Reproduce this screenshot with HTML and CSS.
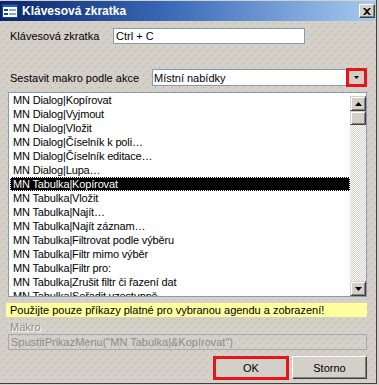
FILE: index.html
```html
<!DOCTYPE html>
<html lang="cs">

<head>
    <meta charset="UTF-8">
    <meta name="viewport" content="width=device-width, initial-scale=1.0">
    <title>Klávesová zkratka</title>
    <link rel="stylesheet" href="styles.css">
</head>

<body>
    <div class="window">
        <div class="titlebar">
            <svg class="app-icon" width="16" height="14" viewBox="0 0 16 14">
                <rect x="0.5" y="0.5" width="15" height="13" fill="#fff" stroke="#1d3f8f"/>
                <rect x="1" y="1" width="14" height="2" fill="#2c5bc4"/>
                <rect x="2" y="5" width="4" height="2" fill="#1d3f8f"/>
                <rect x="7" y="5" width="7" height="2" fill="#7ea6e0"/>
                <rect x="2" y="9" width="4" height="2" fill="#1d3f8f"/>
                <rect x="7" y="9" width="7" height="2" fill="#7ea6e0"/>
            </svg>
            <span class="title">Klávesová zkratka</span>
            <div class="close-btn">
                <svg width="8" height="7" viewBox="0 0 8 7">
                    <path d="M0 0 L2 0 L4 2 L6 0 L8 0 L5 3.5 L8 7 L6 7 L4 5 L2 7 L0 7 L3 3.5 Z" fill="#000"/>
                </svg>
            </div>
        </div>

        <div class="content">
            <div class="row row-key">
                <span class="lbl lbl-key">Klávesová zkratka</span>
                <div class="field field-key">Ctrl + C</div>
            </div>

            <div class="row row-build">
                <span class="lbl lbl-build">Sestavit makro podle akce</span>
                <div class="combo">
                    <span class="combo-text">Místní nabídky</span>
                    <span class="combo-btn">
                        <svg width="5" height="3" viewBox="0 0 5 3"><path d="M0 0 H5 L2.5 3 Z" fill="#000"/></svg>
                    </span>
                </div>
            </div>

            <div class="listbox">
                <div class="items">
                    <div class="item">MN Dialog|Kopírovat</div>
                    <div class="item">MN Dialog|Vyjmout</div>
                    <div class="item">MN Dialog|Vložit</div>
                    <div class="item">MN Dialog|Číselník k poli…</div>
                    <div class="item">MN Dialog|Číselník editace…</div>
                    <div class="item">MN Dialog|Lupa…</div>
                    <div class="item selected">MN Tabulka|Kopírovat</div>
                    <div class="item">MN Tabulka|Vložit</div>
                    <div class="item">MN Tabulka|Najít…</div>
                    <div class="item">MN Tabulka|Najít záznam…</div>
                    <div class="item">MN Tabulka|Filtrovat podle výběru</div>
                    <div class="item">MN Tabulka|Filtr mimo výběr</div>
                    <div class="item">MN Tabulka|Filtr pro:</div>
                    <div class="item">MN Tabulka|Zrušit filtr či řazení dat</div>
                    <div class="item">MN Tabulka|Seřadit vzestupně</div>
                </div>
                <div class="vscroll">
                    <div class="sb-btn">
                        <svg width="7" height="4" viewBox="0 0 7 4"><path d="M3.5 0 L7 4 H0 Z" fill="#000"/></svg>
                    </div>
                    <div class="sb-thumb"></div>
                    <div class="sb-track"></div>
                    <div class="sb-btn">
                        <svg width="7" height="4" viewBox="0 0 7 4"><path d="M0 0 H7 L3.5 4 Z" fill="#000"/></svg>
                    </div>
                </div>
            </div>

            <div class="hint">Použijte pouze příkazy platné pro vybranou agendu a zobrazení!</div>

            <div class="lbl-macro">Makro</div>
            <div class="macro">SpustitPrikazMenu("MN Tabulka|&amp;Kopírovat")</div>

            <div class="buttons">
                <button class="btn btn-ok">OK</button>
                <button class="btn btn-cancel">Storno</button>
            </div>
        </div>
    </div>
</body>

</html>
```

FILE: styles.css
```css
* {
    box-sizing: border-box;
}

html, body {
    margin: 0;
    padding: 0;
}

body {
    width: 379px;
    height: 385px;
    overflow: hidden;
    background-color: #d4d0c8;
    font-family: "Liberation Sans", Arial, sans-serif;
    font-size: 11px;
    color: #000;
}

.window {
    width: 377px;
    height: 384px;
    display: flex;
    flex-direction: column;
    border-right: 1px solid #404040;
    border-bottom: 1px solid #404040;
    padding-top: 1px;
    background-color: #d4d0c8;
}

/* title bar */
.titlebar {
    height: 20px;
    display: flex;
    align-items: center;
    padding: 0 1px 0 2px;
    background: linear-gradient(to right, #0a246a 0%, #3a6ab8 45%, #a6caf0 100%);
    color: #fff;
}

.app-icon {
    flex: none;
    margin-right: 4px;
}

.title {
    font-weight: bold;
    font-size: 12px;
    flex: 1;
}

.close-btn {
    width: 16px;
    height: 14px;
    display: flex;
    align-items: center;
    justify-content: center;
    background-color: #d4d0c8;
    border: 1px solid;
    border-color: #fff #404040 #404040 #fff;
    box-shadow: inset -1px -1px #808080;
}

/* dialog body with dotted backdrop */
.content {
    flex: 1;
    display: flex;
    flex-direction: column;
    padding: 7px 9px 0 8px;
    background-color: #d4d0c8;
    background-image:
        radial-gradient(circle at 0.5px 0.5px, #b3afa7 0.5px, transparent 0.8px),
        radial-gradient(circle at 0.5px 0.5px, #b3afa7 0.5px, transparent 0.8px);
    background-size: 8px 8px;
    background-position: 3px 2px, 7px 6px;
}

.row {
    display: flex;
    align-items: center;
}

.lbl {
    padding-left: 2px;
    flex: none;
}

.row-key {
    height: 16px;
}

.lbl-key {
    width: 105px;
}

.field {
    background: #fff;
    border: 1px solid #7f9db9;
    height: 16px;
    line-height: 14px;
    padding-left: 2px;
}

.field-key {
    width: 192px;
}

.row-build {
    height: 17px;
    margin-top: 25px;
}

.lbl-build {
    width: 144px;
}

.combo {
    width: 214px;
    height: 17px;
    display: flex;
    align-items: center;
    background: #fff;
    border: 1px solid #7f9db9;
}

.combo-text {
    flex: 1;
    padding-left: 1px;
}

.combo-btn {
    width: 15px;
    height: 13px;
    margin-right: 1px;
    display: flex;
    align-items: center;
    justify-content: center;
    background-color: #d4d0c8;
    outline: 3px solid #e8141b;
}

/* list box */
.listbox {
    margin-top: 6px;
    height: 205px;
    display: flex;
    background: #fff;
    border: 1px solid #7f9db9;
    overflow: hidden;
}

.items {
    flex: 1;
    padding-left: 1px;
    overflow: hidden;
}

.item {
    height: 14px;
    line-height: 14px;
    padding-left: 3px;
    white-space: nowrap;
    letter-spacing: -0.15px;
}

.item.selected {
    background: #000;
    color: #fff;
    border: 1px dotted #fff;
    line-height: 12px;
    padding-left: 2px;
}

.vscroll {
    width: 16px;
    flex: none;
    display: flex;
    flex-direction: column;
    padding-top: 3px;
    background: #fff;
}

.sb-btn,
.sb-thumb {
    height: 15px;
    flex: none;
    display: flex;
    align-items: center;
    justify-content: center;
    background-color: #d4d0c8;
    border: 1px solid;
    border-color: #d4d0c8 #404040 #404040 #d4d0c8;
    box-shadow: inset 1px 1px #fff, inset -1px -1px #808080;
}

.sb-thumb {
    height: 14px;
}

.sb-track {
    flex: 1;
    background: repeating-conic-gradient(#fff 0 25%, #d4d0c8 0 50%) 0 0 / 2px 2px;
}

/* bottom part */
.hint {
    margin-top: 6px;
    margin-left: -2px;
    height: 14px;
    line-height: 14px;
    padding-left: 4px;
    background: #ffff9e;
}

.lbl-macro {
    height: 17px;
    padding: 3px 0 0 2px;
    line-height: 14px;
    color: #8c8c8c;
    text-shadow: 1px 1px #fff;
}

.macro {
    height: 16px;
    line-height: 14px;
    padding-left: 2px;
    border: 1px solid #9fa9b6;
    color: #8c8c8c;
    white-space: nowrap;
    overflow: hidden;
}

.buttons {
    margin-top: 6px;
    display: flex;
    justify-content: flex-end;
    gap: 3px;
}

.btn {
    font-family: "Liberation Sans", Arial, sans-serif;
    font-size: 11px;
    color: #000;
    width: 75px;
    height: 23px;
    padding: 0;
    background-color: #d4d0c8;
    border: 1px solid;
    border-color: #fff #404040 #404040 #fff;
    box-shadow: inset -1px -1px #808080;
}

.btn-ok {
    width: 76px;
    height: 24px;
    border: 3px solid #e8141b;
    box-shadow: none;
}
```
